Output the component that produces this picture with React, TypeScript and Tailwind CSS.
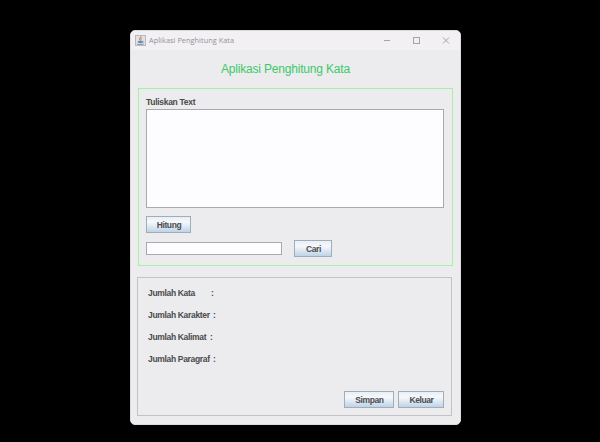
import React from "react";

function JavaIcon() {
  return (
    <svg width="11" height="11" viewBox="0 0 11 11" className="block shrink-0">
      <rect x="0.5" y="0.5" width="10" height="10" fill="#dde3e9" stroke="#b3bbc4" />
      <path d="M5.8 1.2C6.6 2.6 4 3.2 4.6 4.4C4.9 5 5.4 5.2 5.3 5.8" fill="none" stroke="#d8895f" strokeWidth="1.3" />
      <path d="M7.2 3C6 3.8 6 4.4 6.4 5.4" fill="none" stroke="#d8895f" strokeWidth="0.9" />
      <path d="M2.8 6H7.4V7.4C7.2 8.4 3.2 8.4 3 7.2Z" fill="#6c8cae" />
      <path d="M7.2 6.3C8.8 6 8.7 7.4 7 7.6M2 9.1C4 9.7 7 9.7 8.8 9" fill="none" stroke="#6c8cae" strokeWidth="0.9" />
    </svg>
  );
}

function WindowControls() {
  return (
    <svg width="66" height="8" viewBox="0 0 66 8" className="-mt-px block" fill="none" stroke="#a5a3a6" strokeWidth="1">
      <path d="M0 4.5H6" />
      <rect x="29.5" y="1.5" width="6" height="6" />
      <path d="M59 1.5L65 7.5M65 1.5L59 7.5" />
    </svg>
  );
}

function Button({ children, className }: { children: React.ReactNode; className: string }) {
  return (
    <button
      className={`flex shrink-0 items-center justify-center border border-[#a0adbb] bg-linear-to-b from-[#e9eff5] via-[#f6f8fb] via-35% to-[#bfd3e6] pt-px pl-px text-[8.5px] leading-none font-bold tracking-[-0.4px] text-[#4a4b50] ${className}`}
    >
      {children}
    </button>
  );
}

const results = [
  { label: "Jumlah Kata", width: "w-[63px]" },
  { label: "Jumlah Karakter", width: "w-[65px]" },
  { label: "Jumlah Kalimat", width: "w-[62px]" },
  { label: "Jumlah Paragraf", width: "w-[65px]" },
];

export default function App() {
  return (
    <div className="h-[442px] w-[600px] overflow-hidden bg-black pt-[30px] pl-[130px] font-['Liberation_Sans',Arial,sans-serif] text-[#4a4a4c]">
      <main className="flex h-[395px] w-[331px] flex-col overflow-hidden rounded-[5px] border border-[#dcdadd] bg-[#ecebed]">
        <header className="flex h-[19px] shrink-0 items-center bg-[#f3f0f4] pr-[10px] pl-1">
          <JavaIcon />
          <span className="ml-[3px] grow font-['Open_Sans','Noto_Sans',sans-serif] text-[7.3px] leading-none tracking-[0.06px] text-[#929093]">
            Aplikasi Penghitung Kata
          </span>
          <WindowControls />
        </header>
        <h1 className="mt-[12px] ml-[90px] h-[14px] shrink-0 text-[12px] leading-[15px] tracking-[-0.19px] whitespace-nowrap text-[#3bca6b]">
          Aplikasi Penghitung Kata
        </h1>
        <section className="mt-[12px] ml-[7px] h-[178px] w-[315px] shrink-0 border border-[#a8efa6] pl-[7px]">
          <label className="block h-[20px] pt-[9px] text-[8.5px] leading-[9px] font-bold tracking-[-0.3px]">Tuliskan Text</label>
          <textarea className="block h-[99px] w-[298px] resize-none border border-[#a9aaae] bg-[#fdfcfe]" />
          <Button className="mt-[8px] h-[17px] w-[45px]">Hitung</Button>
          <div className="mt-[7px] flex items-center">
            <input className="h-[13px] w-[136px] border border-[#a6abb0] bg-[#fdfcfe]" />
            <Button className="ml-[12px] h-[17px] w-[38px]">Cari</Button>
          </div>
        </section>
        <section className="mt-[11px] ml-[6px] flex h-[139px] w-[315px] shrink-0 flex-col border border-[#c3c2c6] pl-[10px]">
          <dl className="flex flex-col gap-[12px] pt-[10px] text-[8.5px] leading-[10px] font-bold tracking-[-0.33px] whitespace-nowrap">
            {results.map(({ label, width }) => (
              <div key={label} className="flex">
                <dt className={width}>{label}</dt>
                <dd>:</dd>
              </div>
            ))}
          </dl>
          <div className="mt-auto mr-[7px] mb-[7px] flex justify-end gap-1">
            <Button className="h-[17px] w-[50px]">Simpan</Button>
            <Button className="h-[17px] w-[46px]">Keluar</Button>
          </div>
        </section>
      </main>
    </div>
  );
}
